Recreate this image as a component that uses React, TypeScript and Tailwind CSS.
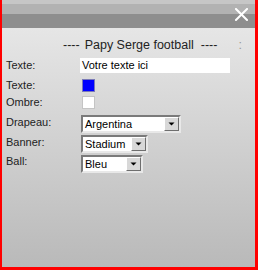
import React from "react";

function Select({ value, width }: { value: string; width: string }) {
  return (
    <div
      className={`${width} h-[18px] flex border-2 border-t-[#7a7a7a] border-l-[#7a7a7a] border-b-[#e8e8e8] border-r-[#e8e8e8] bg-white`}
    >
      <div className="flex-1 flex items-center pl-[2px] text-[11px] leading-none text-black">
        {value}
      </div>
      <div className="w-[15px] h-full flex items-center justify-center bg-[#d8d8d8] border border-t-white border-l-white border-b-[#6e6e6e] border-r-[#6e6e6e]">
        <svg width="7" height="4" viewBox="0 0 7 4">
          <path d="M0.5 0.5 H6.5 L3.5 3.5 Z" fill="#000" />
        </svg>
      </div>
    </div>
  );
}

export default function App() {
  return (
    <div
      className="w-[258px] h-[270px] flex flex-col border-l-2 border-r-[3px] border-b-[3px] border-[#ff0000] overflow-hidden"
      style={{ fontFamily: '"Liberation Sans", Arial, sans-serif' }}
    >
      <div className="h-[28px] flex justify-end items-start pt-[8px] pr-[7px] bg-[linear-gradient(to_bottom,#c6c6c6_0px,#c6c6c6_4px,#b2b2b2_4px,#b2b2b2_14px,#8e8e8e_14px,#8e8e8e_28px)]">
        <svg width="13" height="13" viewBox="0 0 13 13">
          <path d="M1 1 L12 12 M12 1 L1 12" stroke="#fff" strokeWidth="2" strokeLinecap="square" />
        </svg>
      </div>
      <div className="flex-1 flex flex-col pl-[4px] bg-[linear-gradient(to_bottom,#e6e6e6,#b9b9b9)] text-[#222]">
        <div className="mt-[9px] h-[16px] flex items-center text-[12.5px] leading-none text-[#222]">
          <span className="ml-[57px]">----</span>
          <span className="ml-[5px]">Papy Serge football</span>
          <span className="ml-[7px]">----</span>
          <span className="ml-[21px] text-[#999]">:</span>
        </div>
        <div className="mt-[5px] h-[15px] flex items-center">
          <div className="w-[74px] text-[11px] leading-none">Texte:</div>
          <div className="w-[150px] h-full bg-white flex items-center pl-[2px] text-[11px] leading-none text-black">
            Votre texte ici
          </div>
        </div>
        <div className="mt-[6px] h-[13px] flex items-center">
          <div className="w-[76px] text-[11px] leading-none">Texte:</div>
          <div className="w-[13px] h-[13px] bg-[#0000ff] border border-[#7a7ab8]" />
        </div>
        <div className="mt-[4px] h-[13px] flex items-center">
          <div className="w-[76px] text-[11px] leading-none">Ombre:</div>
          <div className="w-[13px] h-[13px] bg-white border border-[#c4c4c4]" />
        </div>
        <div className="mt-[6px] flex items-center">
          <div className="w-[75px] text-[11px] leading-none pb-[4px]">Drapeau:</div>
          <Select value="Argentina" width="w-[100px]" />
        </div>
        <div className="mt-[2px] flex items-center">
          <div className="w-[75px] text-[11px] leading-none pb-[4px]">Banner:</div>
          <Select value="Stadium" width="w-[67px]" />
        </div>
        <div className="mt-[2px] flex items-center">
          <div className="w-[75px] text-[11px] leading-none pb-[5px]">Ball:</div>
          <Select value="Bleu" width="w-[62px]" />
        </div>
      </div>
    </div>
  );
}
